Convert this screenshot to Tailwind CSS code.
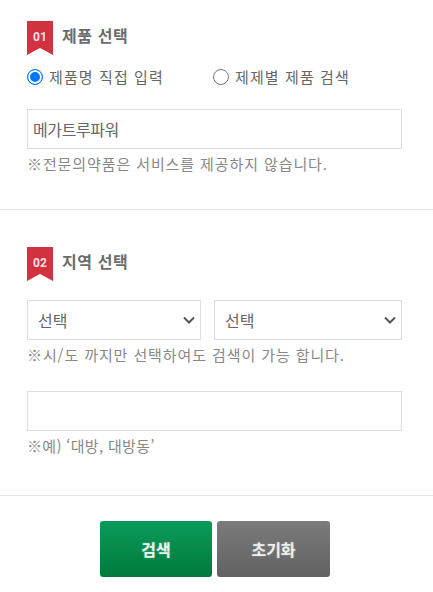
<!DOCTYPE html>
<html lang="ko">
<head>
  <meta charset="UTF-8">
  <meta name="viewport" content="width=device-width, initial-scale=1.0">
  <title>제품 선택</title>
  <script src="https://cdn.jsdelivr.net/npm/@tailwindcss/browser@4"></script>
</head>
<body class="bg-white font-['Noto_Sans_CJK_KR','Noto_Sans',sans-serif] text-[#666]">
  <section class="h-[210px] border-b border-[#e5e5e5] pt-[21px] px-[27px]">
    <div class="flex items-start gap-[9px] h-[34px]">
      <svg class="w-[26px] h-[34px] shrink-0" viewBox="0 0 26 34">
        <path d="M0 0H26V34L13 27L0 34Z" fill="#d0323f"/>
        <text x="13" y="20" text-anchor="middle" fill="#fff" font-size="12" font-weight="700" font-family="Roboto, sans-serif" opacity="0.85">01</text>
      </svg>
      <h2 class="text-[16px] leading-[28px] font-bold tracking-[0.6px] text-[#6b6b6b]">제품 선택</h2>
    </div>
    <div class="flex items-center mt-[10px] h-[24px] text-[15px] font-normal text-[#666] tracking-[1.1px]">
      <label class="flex items-center gap-[6px] w-[186px]">
        <input type="radio" name="mode" checked class="appearance-none w-[16px] h-[16px] rounded-full border-[1.5px] border-[#0075ff] bg-[#0075ff] shadow-[inset_0_0_0_2px_#fff]">
        <span>제품명 직접 입력</span>
      </label>
      <label class="flex items-center gap-[6px]">
        <input type="radio" name="mode" class="appearance-none w-[16px] h-[16px] rounded-full border border-[#767676] bg-white">
        <span>제제별 제품 검색</span>
      </label>
    </div>
    <input type="text" value="메가트루파워" class="block w-[375px] h-[40px] mt-[20px] border border-[#ddd] px-[5px] text-[16px] tracking-[-0.4px] text-[#666] outline-none">
    <p class="mt-[5px] text-[15px] leading-[20px] tracking-[0.9px] text-[#888]">※전문의약품은 서비스를 제공하지 않습니다.</p>
  </section>

  <section class="h-[286px] border-b border-[#e5e5e5] pt-[37px] px-[27px]">
    <div class="flex items-start gap-[9px] h-[34px]">
      <svg class="w-[26px] h-[34px] shrink-0" viewBox="0 0 26 34">
        <path d="M0 0H26V34L13 27L0 34Z" fill="#d0323f"/>
        <text x="13" y="20" text-anchor="middle" fill="#fff" font-size="12" font-weight="700" font-family="Roboto, sans-serif" opacity="0.85">02</text>
      </svg>
      <h2 class="text-[16px] leading-[28px] font-bold tracking-[0.6px] text-[#6b6b6b]">지역 선택</h2>
    </div>
    <div class="flex gap-[13px] mt-[19px]">
      <div class="relative w-[174px] h-[40px] border border-[#ddd] flex items-center pl-[10px] text-[16px] text-[#666]">
        선택
        <svg class="absolute right-[5px] top-[13px] w-[12px] h-[12px]" viewBox="0 0 12 12" fill="none" stroke="#555" stroke-width="2"><path d="M1 3.5L6 8.5L11 3.5"/></svg>
      </div>
      <div class="relative w-[188px] h-[40px] border border-[#ddd] flex items-center pl-[10px] text-[16px] text-[#666]">
        선택
        <svg class="absolute right-[5px] top-[13px] w-[12px] h-[12px]" viewBox="0 0 12 12" fill="none" stroke="#555" stroke-width="2"><path d="M1 3.5L6 8.5L11 3.5"/></svg>
      </div>
    </div>
    <p class="mt-[5px] text-[15px] leading-[20px] tracking-[0.9px] text-[#888]">※시/도 까지만 선택하여도 검색이 가능 합니다.</p>
    <input type="text" class="block w-[375px] h-[40px] mt-[26px] border border-[#ddd] outline-none">
    <p class="mt-[5px] text-[15px] leading-[20px] tracking-[0.3px] text-[#888]">※예) ‘대방, 대방동’</p>
  </section>

  <div class="flex pt-[25px] pl-[100px] gap-[5px]">
    <button class="w-[112px] h-[56px] rounded-[3px] bg-gradient-to-b from-[#0c9b5c] to-[#007a3c] text-[#e8f5ee] text-[16px] font-bold [text-shadow:0_0_2px_rgba(255,255,255,0.35)]">검색</button>
    <button class="w-[113px] h-[56px] rounded-[3px] bg-gradient-to-b from-[#7b7b7b] to-[#626262] text-[#eee] text-[16px] font-bold [text-shadow:0_0_2px_rgba(255,255,255,0.35)]">초기화</button>
  </div>
</body>
</html>
